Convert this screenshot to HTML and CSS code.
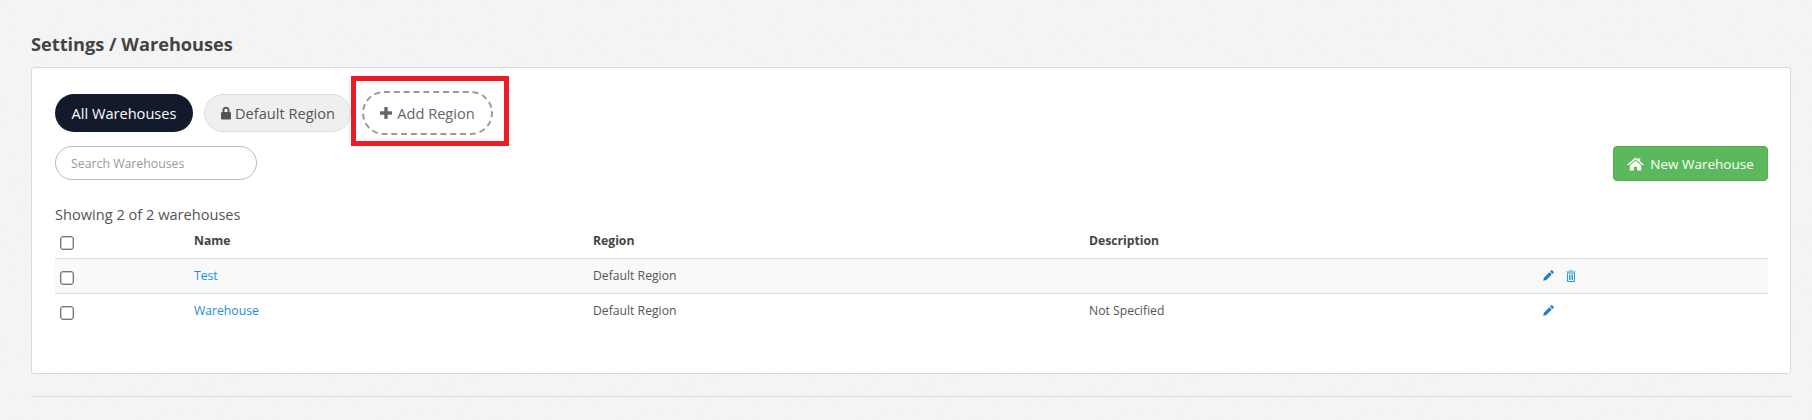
FILE: index.html
```html
<!DOCTYPE html>
<html lang="en">
<head>
<meta charset="utf-8">
<title>Settings / Warehouses</title>
<link rel="stylesheet" href="styles.css">
</head>
<body>
<h1 class="page-title">Settings / Warehouses</h1>
<section class="panel">
  <div class="tabs">
    <a class="pill pill-active">All Warehouses</a>
    <a class="pill pill-default"><svg class="ico-lock" viewBox="0 0 12 14"><path d="M2.5 6V4.2a3.500 3.500 0 0 1 7 0V6h.4c.6 0 1.100.5 1.100 1.100v5.300c0 .6-.5 1.100-1.100 1.100H2.100c-.6 0-1.100-.5-1.100-1.100V7.100C1 6.500 1.500 6 2.100 6zm1.900 0h3.200V4.200a1.600 1.600 0 0 0-3.200 0z" fill-rule="evenodd"/></svg>Default Region</a>
    <a class="pill pill-add"><svg class="ico-plus" viewBox="0 0 12 12"><path d="M5 0h2c.4 0 .7.300.7.700v3.600h3.600c.4 0 .7.300.7.700v2c0 .4-.3.700-.7.700H7.700v3.600c0 .4-.3.700-.7.700H5c-.4 0-.7-.3-.7-.7V7.700H.7C.3 7.700 0 7.400 0 7V5c0-.4.300-.7.700-.7h3.600V.7C4.300.3 4.600 0 5 0z"/></svg>Add Region</a>
    <span class="highlight"></span>
  </div>
  <div class="toolbar">
    <input class="search" type="text" placeholder="Search Warehouses">
    <button class="btn-new"><svg class="ico-home" viewBox="0 0 18 14"><path d="M9 0l3 2.600V1h2v3.300l3.800 3.300-.9 1L9 2.300 1.100 8.600l-.9-1z"/><path d="M9 3.500l6 4.900V14h-4.200v-4H7.200v4H3V8.400z"/></svg>New Warehouse</button>
  </div>
  <p class="count">Showing 2 of 2 warehouses</p>
  <table class="grid">
    <colgroup><col class="c-check"><col class="c-name"><col class="c-region"><col class="c-desc"><col></colgroup>
    <thead>
      <tr><th class="cell-check"><span class="box"></span></th><th>Name</th><th>Region</th><th>Description</th><th></th></tr>
    </thead>
    <tbody>
      <tr class="odd">
        <td class="cell-check"><span class="box"></span></td><td><a class="link">Test</a></td><td>Default Region</td><td></td>
        <td>
          <div class="actions">
            <svg class="ico-pencil" viewBox="0 0 12 12"><path d="M9 .4c.3-.3.700-.3 1 0l1.600 1.600c.3.300.3.700 0 1L10.300 4.300 7.700 1.700zM7 2.400 9.600 5l-6 6L.2 11.800 1 8.400z"/></svg>
            <svg class="ico-trash" viewBox="0 0 10 12"><path class="lid" d="M3.400 0h3.200l.5 1.200H10v1H0v-1h2.900z"/><path d="M1 2.500h8V11c0 .6-.4 1-1 1H2c-.6 0-1-.4-1-1zm1 1V11h6V3.500zM3 4.500h1V10H3zm1.500 0h1V10h-1zm1.500 0h1V10H6z" fill-rule="evenodd"/></svg>
          </div>
        </td>
      </tr>
      <tr>
        <td class="cell-check"><span class="box"></span></td><td><a class="link">Warehouse</a></td><td>Default Region</td><td>Not Specified</td>
        <td>
          <div class="actions">
            <svg class="ico-pencil" viewBox="0 0 12 12"><path d="M9 .4c.3-.3.700-.3 1 0l1.600 1.600c.3.300.3.700 0 1L10.300 4.300 7.700 1.700zM7 2.400 9.600 5l-6 6L.2 11.800 1 8.400z"/></svg>
          </div>
        </td>
      </tr>
    </tbody>
  </table>
</section>
<hr class="rule">
</body>
</html>
```
FILE: styles.css
```css
* { box-sizing: border-box; }
html, body { height: 100%; }
body {
  margin: 0;
  padding: 32px 21px 0 31px;
  background-color: #f6f6f6;
  background-image: url("data:image/svg+xml,%3Csvg xmlns='http://www.w3.org/2000/svg' width='240' height='240'%3E%3Cfilter id='n'%3E%3CfeTurbulence type='fractalNoise' baseFrequency='.55' numOctaves='2' stitchTiles='stitch'/%3E%3CfeColorMatrix values='0 0 0 0 .6 0 0 0 0 .6 0 0 0 0 .6 .07 .07 .07 0 -.06'/%3E%3C/filter%3E%3Crect width='240' height='240' filter='url(%23n)'/%3E%3C/svg%3E");
  font-family: "Open Sans", sans-serif;
  font-size: 12.2px;
  color: #555;
  overflow: hidden;
}
.page-title {
  margin: 0 0 11px;
  font-size: 18.2px;
  line-height: 24px;
  font-weight: 700;
  color: #444;
}
.panel {
  height: 307px;
  padding: 26px 22px 0 23px;
  background: #fff;
  border: 1px solid #d9d9d9;
  border-radius: 3px;
}
.tabs {
  position: relative;
  display: flex;
  align-items: center;
  gap: 11px;
  height: 38px;
}
.pill {
  display: flex;
  align-items: center;
  justify-content: center;
  height: 38px;
  border-radius: 19px;
  font-size: 14.6px;
  white-space: nowrap;
}
.pill-active {
  width: 138px;
  background: #121a2b;
  color: #fff;
}
.pill-default {
  width: 147px;
  background: #efefef;
  border: 1px solid #ddd;
  color: #555;
}
.pill-add {
  width: 131px;
  height: 44px;
  border-radius: 22px;
  border: 2px dashed #999;
  color: #666;
}
.ico-lock { width: 12px; height: 14px; margin-right: 3px; fill: #555; }
.ico-plus { width: 12px; height: 12px; margin-right: 5px; fill: #666; }
.highlight {
  position: absolute;
  left: 296px;
  top: -18px;
  width: 158px;
  height: 70px;
  border: 5px solid #ed1c24;
}
.toolbar {
  display: flex;
  justify-content: space-between;
  align-items: flex-start;
  margin-top: 14px;
}
.search {
  width: 202px;
  height: 34px;
  padding: 0 15px;
  border: 1px solid #bbb;
  border-radius: 17px;
  font: 12.3px "Open Sans", sans-serif;
  outline: none;
}
.search::placeholder { color: #999; }
.btn-new {
  display: flex;
  align-items: center;
  justify-content: center;
  width: 155px;
  height: 35px;
  background: #5cb85c;
  border: 1px solid #4cae4c;
  border-radius: 4px;
  color: #fff;
  font: 13.5px "Open Sans", sans-serif;
}
.ico-home { width: 17px; height: 14px; margin-right: 6px; fill: #fff; }
.count {
  margin: 23px 0 0;
  font-size: 14.6px;
  line-height: 20px;
  color: #555;
}
.grid {
  width: 100%;
  table-layout: fixed;
  border-collapse: collapse;
}
.c-check { width: 133px; }
.c-name { width: 399px; }
.c-region { width: 496px; }
.c-desc { width: 454px; }
.grid th, .grid td {
  padding: 0 6px;
  text-align: left;
  vertical-align: middle;
}
.grid .cell-check { padding-left: 5px; }
.grid thead tr { height: 34px; }
.grid th { font-weight: 700; color: #444; }
.grid tbody tr { height: 35px; border-top: 1px solid #ddd; }
.odd { background: #f9f9f9; }
.box {
  display: block;
  width: 14px;
  height: 14px;
  margin-top: 5px;
  border: 1px solid #767676;
  border-radius: 3px;
  background: #fff;
  box-shadow: inset 0 0 0 .5px #999;
}
.link { color: #1a8fd6; }
.actions { display: flex; align-items: center; gap: 12px; }
.ico-pencil { width: 11px; height: 11px; fill: #1a7fd0; }
.ico-trash { width: 10px; height: 12px; fill: #2c9ee0; }
.lid { fill: #8cc4ea; }
.rule {
  margin: 22px 0 0;
  border: 0;
  border-top: 1px solid #ddd;
}
```
